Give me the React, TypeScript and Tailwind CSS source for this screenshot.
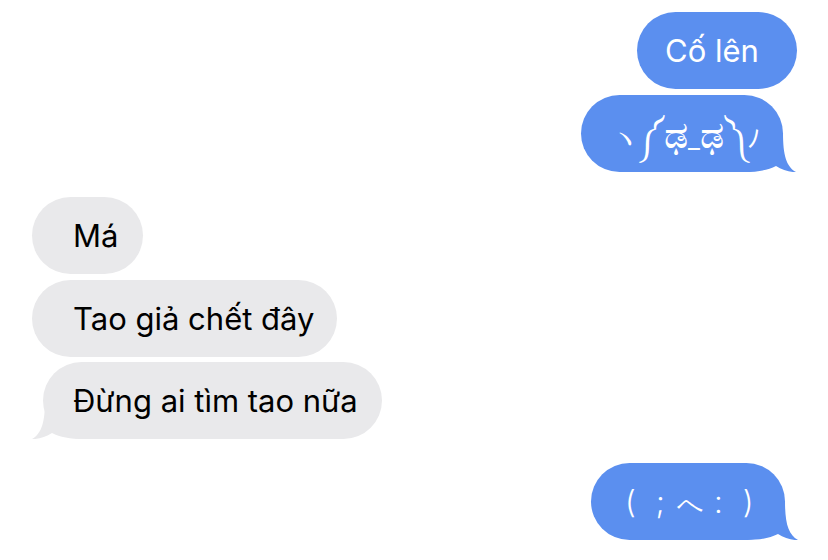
import React from 'react';

type Side = 'in' | 'out';

const Tail: React.FC<{ side: Side }> = ({ side }) => (
  <svg
    viewBox="0 0 52 39"
    className={
      side === 'out'
        ? 'absolute bottom-0 right-[-13px] w-[52px] h-[39px] fill-[#5b8fef]'
        : 'absolute bottom-0 left-[-11px] w-[52px] h-[39px] fill-[#e9e9eb] -scale-x-100'
    }
  >
    <path d="M0 0 L39 0 C39 21.5 42 33.5 52 39 C46 39.5 38 37 32 33 C24 37 14 39 0 39 Z" />
  </svg>
);

const Bubble: React.FC<{
  side: Side;
  tail?: boolean;
  className: string;
  children: React.ReactNode;
}> = ({ side, tail, className, children }) => (
  <div
    className={`relative flex items-center h-[77px] rounded-[38.5px] whitespace-nowrap text-[31px] ${
      side === 'out' ? 'bg-[#5b8fef] text-white' : 'bg-[#e9e9eb] text-black'
    } ${className}`}
  >
    {tail && <Tail side={side} />}
    <span className="relative flex items-baseline leading-none">{children}</span>
  </div>
);

export default function App() {
  return (
    <div
      className="w-[828px] h-[560px] bg-white flex flex-col overflow-hidden pt-[12px]"
      style={{ fontFamily: 'Inter, "Noto Sans", "DejaVu Sans", sans-serif' }}
    >
      {/* outgoing */}
      <div className="flex flex-col items-end gap-[6px] pr-[31px]">
        <Bubble side="out" className="w-[160px] pl-[28px]">
          Cố lên
        </Bubble>
        <Bubble side="out" tail className="w-[202px] pl-[31px] mr-[14px]">
          <span className="text-[26px]">ヽ</span>
          <span className="text-[32px]">༼</span>
          <span className="text-[38px]">ಢ</span>
          <span className="text-[26px]">_</span>
          <span className="text-[38px]">ಢ</span>
          <span className="text-[32px]">༽</span>
          <span className="text-[26px]">ﾉ</span>
        </Bubble>
      </div>

      {/* incoming */}
      <div className="flex flex-col items-start pl-[32px] mt-[25px]">
        <Bubble side="in" className="w-[111px] pl-[41px]">
          Má
        </Bubble>
        <Bubble side="in" className="w-[305px] pl-[41px] mt-[6px]">
          Tao giả chết đây
        </Bubble>
        <Bubble side="in" tail className="w-[339px] pl-[30px] ml-[11px] mt-[5px]">
          Đừng ai tìm tao nữa
        </Bubble>
      </div>

      {/* outgoing */}
      <div className="flex flex-col items-end pr-[31px] mt-[24px]">
        <Bubble side="out" tail className="w-[194px] pl-[34px] mr-[12px]">
          <span className="font-light">(</span>
          <span className="font-light ml-[20px]">;</span>
          <span className="text-[26px] font-light ml-[12px]">へ</span>
          <span className="font-light ml-[10px]">:</span>
          <span className="font-light ml-[20px]">)</span>
        </Bubble>
      </div>
    </div>
  );
}
